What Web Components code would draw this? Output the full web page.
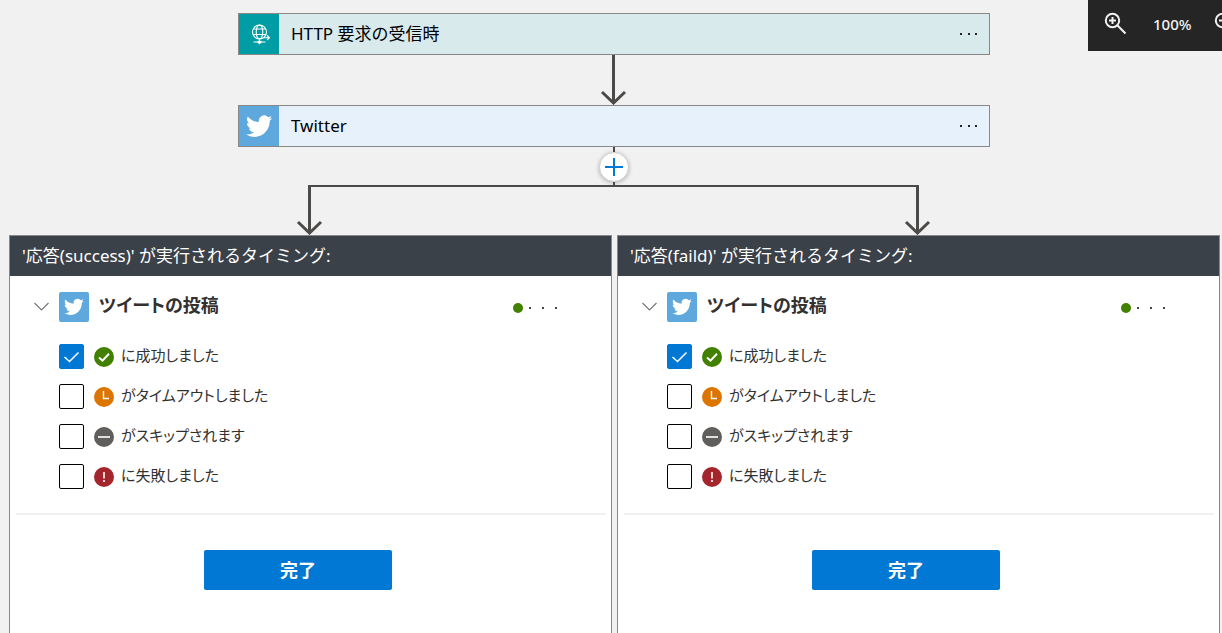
<!DOCTYPE html>
<html lang="ja">
<head>
<meta charset="utf-8">
<meta name="viewport" content="width=device-width, initial-scale=1">
<title>ロジック フロー</title>
<style>
  html, body { margin: 0; height: 100%; }
  body {
    background: #f1f1f1;
    color: #000;
    font: 17px/24px "Noto Sans", "Noto Sans CJK JP", sans-serif;
    overflow: hidden;
  }
</style>
</head>
<body>
<flow-canvas>
  <zoom-bar slot="tools"></zoom-bar>
  <flow-card kind="http">HTTP 要求の受信時</flow-card>
  <flow-arrow></flow-arrow>
  <flow-card kind="twitter">Twitter</flow-card>
  <flow-fork slot="branches"></flow-fork>
  <run-after slot="panels"><span slot="title">'応答(success)' が実行されるタイミング:</span>ツイートの投稿</run-after>
  <run-after slot="panels"><span slot="title">'応答(faild)' が実行されるタイミング:</span>ツイートの投稿</run-after>
</flow-canvas>

<script>
const define = (name, html, setup) => {
  const template = document.createElement('template');
  template.innerHTML = html;
  customElements.define(name, class extends HTMLElement {
    constructor() {
      super();
      this.attachShadow({ mode: 'open' }).append(template.content.cloneNode(true));
    }
    connectedCallback() { if (setup) setup(this, this.shadowRoot); }
  });
};

define('flow-canvas', `
<style>
  :host { display: flex; flex-direction: column; min-height: 100vh; box-sizing: border-box; padding-top: 13px; position: relative; }
  .steps { display: flex; flex-direction: column; align-items: center; padding: 0 3px 0 9px; }
  .branches { padding: 0 2px 0 9px; }
  .panels { flex: 1; display: grid; grid-template-columns: 1fr 1fr; gap: 5px; padding: 0 2px 0 9px; }
  ::slotted(zoom-bar) { position: absolute; top: 0; right: 0; }
</style>
<slot name="tools"></slot>
<div class="steps"><slot></slot></div>
<div class="branches"><slot name="branches"></slot></div>
<div class="panels"><slot name="panels"></slot></div>`);

define('zoom-bar', `
<style>
  :host { display: flex; align-items: center; width: 134px; height: 51px; overflow: hidden; background: #252525; color: #f3f2f1; }
  button { all: unset; flex: none; display: flex; }
  .in { margin-left: 16px; }
  .out { margin-left: 23px; }
  span { flex: none; width: 38px; margin-left: 26px; font: 500 15px/20px "Noto Sans", sans-serif; text-align: center; padding-bottom: 4px; }
  svg { fill: none; stroke: currentColor; stroke-width: 2; padding-bottom: 4px; }
</style>
<button class="in" aria-label="拡大"><svg width="23" height="23" viewBox="0 0 23 23"><circle cx="8.500" cy="8.500" r="6.700"/><path d="M13.300 13.300L21.500 21.500M5 8.500H12M8.500 5V12"/></svg></button>
<span>100%</span>
<button class="out" aria-label="縮小"><svg width="23" height="23" viewBox="0 0 23 23"><circle cx="8.500" cy="8.500" r="6.700"/><path d="M13.300 13.300L21.500 21.500M5 8.500H12"/></svg></button>`);

define('twitter-icon', `
<style>
  :host { display: grid; place-items: center; background: #5fa8dd; }
  svg { width: 66%; height: 66%; fill: #fff; }
</style>
<svg viewBox="0 2 24 20" aria-hidden="true"><path d="M23.950 4.570a10 10 0 0 1-2.820.770 4.960 4.960 0 0 0 2.160-2.720c-.95.550-2 .950-3.130 1.180a4.920 4.920 0 0 0-8.380 4.480C7.690 8.100 4.070 6.130 1.640 3.160a4.820 4.820 0 0 0-.67 2.480c0 1.700.870 3.210 2.190 4.100a4.900 4.900 0 0 1-2.230-.62v.060a4.920 4.920 0 0 0 3.950 4.830 5 5 0 0 1-2.210.080 4.940 4.940 0 0 0 4.600 3.420A9.870 9.870 0 0 1 0 19.540a14 14 0 0 0 7.550 2.210c9.050 0 14-7.500 14-13.980 0-.21 0-.42-.02-.63a9.940 9.940 0 0 0 2.460-2.550z"/></svg>`);

define('http-icon', `
<style>
  :host { display: grid; place-items: center; background: #009da5; }
  svg { fill: none; stroke: #fff; stroke-width: 1.1; margin: 1px 0 0 4px; }
</style>
<svg width="20" height="22" viewBox="0 0 20 22" aria-hidden="true"><circle cx="8.500" cy="8" r="7"/><ellipse cx="8.500" cy="8" rx="3.300" ry="7"/><path d="M2.300 5H14.700M2 10.500H14.500M8.500 15V18M2.500 18H14.500M12 13.800H18M16 11.500L18.500 13.800 16 16"/><path d="M6 18L8.500 16 11 18 8.500 20.500Z" fill="#fff" stroke="none"/></svg>`);

define('flow-card', `
<style>
  :host { display: flex; align-items: center; box-sizing: border-box; width: 752px; max-width: 100%; height: 42px; border: 1px solid #8a8886; background: #e6f1fb; }
  :host([kind="http"]) { background: #d9eaec; }
  .icon, .icon > * { flex: none; width: 40px; height: 40px; }
  .name { flex: 1; padding-left: 12px; }
  button { all: unset; display: flex; margin-right: 11px; }
</style>
<div class="icon"></div>
<div class="name"><slot></slot></div>
<button aria-label="メニュー"><svg width="18" height="2" fill="#252423"><path d="M0 0h2v2H0zM8 0h2v2H8zM15 0h2v2h-2z"/></svg></button>`,
(host, root) => {
  root.querySelector('.icon').append(document.createElement(host.getAttribute('kind') + '-icon'));
});

define('flow-arrow', `
<style>
  :host { display: block; height: 50px; }
  svg { display: block; fill: none; stroke: #4c4a48; stroke-width: 3; }
</style>
<svg width="28" height="50" aria-hidden="true"><path d="M13.500 0V48M2 37L13.500 48 25 37"/></svg>`);

define('flow-fork', `
<style>
  :host { display: block; }
  .joint { display: flex; flex-direction: column; align-items: center; padding-right: 1px; }
  .stem { width: 2px; height: 5px; background: #4c4a48; }
  .stem.short { height: 3px; }
  button { all: unset; display: grid; place-items: center; box-sizing: border-box; width: 30px; height: 30px; border: 1px solid #d2d0ce; border-radius: 50%; background: #fff; box-shadow: 0 1px 4px #0004; }
  .split { display: flex; margin: 0 calc(25% - 14px) 0 calc(25% - 16px); }
  .line { flex: 1; height: 2px; background: #4c4a48; }
  svg { flex: none; display: block; fill: none; stroke: #4c4a48; stroke-width: 3; }
  button svg { stroke: #0078d4; stroke-width: 2; }
  .bar { stroke-width: 2; }
</style>
<div class="joint">
  <div class="stem"></div>
  <button aria-label="ステップの追加"><svg width="18" height="18"><path d="M9 0V18M0 9H18"/></svg></button>
  <div class="stem short"></div>
</div>
<div class="split">
  <svg width="27" height="50" aria-hidden="true"><path class="bar" d="M27 1H12"/><path d="M13.500 0V48M2 37L13.500 48 25 37"/></svg>
  <div class="line"></div>
  <svg width="27" height="50" aria-hidden="true"><path class="bar" d="M0 1H15"/><path d="M13.500 0V48M2 37L13.500 48 25 37"/></svg>
</div>`);

define('status-icon', `
<style>
  :host { display: block; width: 20px; height: 20px; }
  svg { display: block; fill: none; stroke: #fff; stroke-width: 2; }
</style>
<svg width="20" height="20" aria-hidden="true"><circle cx="10" cy="10" r="10" stroke="none"/><path/></svg>`,
(host, root) => {
  const [color, path, width] = {
    success: ['#428000', 'M5 10.500L8.500 13.700 15 6.700', 2],
    timeout: ['#db7500', 'M9.500 4V11.500H15', 1.4],
    skipped: ['#605e5c', 'M4 10H16', 1.6],
    failed: ['#a4262c', 'M10 5V11.500M10 13V15', 1.6]
  }[host.getAttribute('kind')];
  root.querySelector('circle').setAttribute('fill', color);
  root.querySelector('path').setAttribute('d', path);
  root.querySelector('path').setAttribute('style', 'stroke-width:' + width);
});

define('run-option', `
<style>
  :host { display: block; }
  label { display: flex; align-items: center; height: 40px; color: #323130; }
  .box { display: grid; width: 25px; height: 25px; margin-right: 10px; }
  .box > * { grid-area: 1 / 1; }
  input { appearance: none; margin: 0; border: 1px solid #000; border-radius: 2px; background: #fff; }
  input:checked { background: #0078d4; border-color: #0078d4; }
  svg { z-index: 1; fill: none; stroke: #fff; stroke-width: 1.5; visibility: hidden; pointer-events: none; }
  input:checked + svg { visibility: visible; }
  .icon { padding-top: 2px; }
  .text { padding: 0 0 2px 7px; font-size: 15px; font-feature-settings: "palt"; }
</style>
<label><span class="box"><input type="checkbox"><svg width="25" height="25"><path d="M5.500 13L10.500 17.500 19.500 8.500"/></svg></span><span class="icon"></span><span class="text"><slot></slot></span></label>`,
(host, root) => {
  root.querySelector('input').checked = host.hasAttribute('checked');
  const icon = document.createElement('status-icon');
  icon.setAttribute('kind', host.getAttribute('kind'));
  root.querySelector('.icon').append(icon);
});

define('run-after', `
<style>
  :host { display: block; border: 1px solid #8a8886; border-bottom: 0; background: #fff; }
  header { display: flex; align-items: center; height: 40px; padding-left: 12px; background: #3b4149; color: #fff; }
  .action { display: flex; align-items: center; height: 30px; padding: 16px 51px 0 24px; }
  button { all: unset; }
  .chevron, .menu { display: flex; }
  .state { display: flex; align-items: center; padding-top: 2px; }
  twitter-icon { width: 30px; height: 30px; margin-left: 10px; border-radius: 2px; }
  h2 { flex: 1; margin: 0; padding: 0 0 4px 10px; font-size: 18px; line-height: 24px; color: #323130; font-feature-settings: "palt"; }
  .dot { width: 10px; height: 10px; margin-right: 6px; border-radius: 50%; background: #428000; }
  .options { padding: 14px 0 0 49px; }
  hr { height: 2px; margin: 17px 5px 0 6px; border: 0; background: #f1f1f1; }
  footer { display: flex; justify-content: center; padding: 35px 25px 0 0; }
  .done { width: 188px; height: 40px; border-radius: 2px; background: #0078d4; color: #fff; font-size: 18px; font-weight: 700; text-align: center; line-height: 40px; }
</style>
<header><slot name="title"></slot></header>
<div class="action">
  <button class="chevron" aria-label="折りたたむ"><svg width="15" height="10" fill="none" stroke="#797775" stroke-width="1.200"><path d="M0.500 1L7.500 8 14.500 1"/></svg></button>
  <twitter-icon></twitter-icon>
  <h2><slot></slot></h2>
  <div class="state">
    <span class="dot"></span>
    <button class="menu" aria-label="メニュー"><svg width="31" height="2" fill="#484644"><path d="M0 0h2v2H0zM13 0h2v2h-2zM26 0h2v2h-2z"/></svg></button>
  </div>
</div>
<div class="options">
  <run-option kind="success" checked>に成功しました</run-option>
  <run-option kind="timeout">がタイムアウトしました</run-option>
  <run-option kind="skipped">がスキップされます</run-option>
  <run-option kind="failed">に失敗しました</run-option>
</div>
<hr>
<footer><button class="done">完了</button></footer>`);
</script>
</body>
</html>
